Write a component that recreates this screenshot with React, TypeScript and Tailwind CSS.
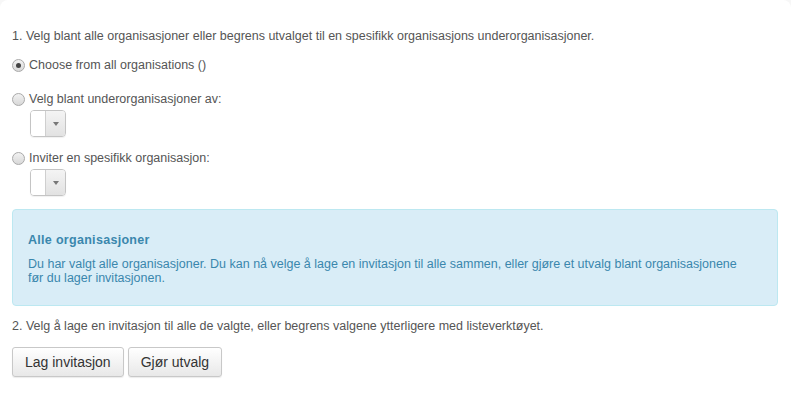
import React from "react";

function Radio({ checked }: { checked?: boolean }) {
  return (
    <span className="w-[13px] h-[13px] rounded-full border border-[#a9a9a9] bg-gradient-to-b from-[#f2f2f2] to-[#d8d8d8] flex items-center justify-center shrink-0">
      {checked && <span className="w-[5px] h-[5px] rounded-full bg-[#444]" />}
    </span>
  );
}

function Select() {
  return (
    <div className="ml-[18px] w-[36px] h-[27px] rounded-[4px] border border-[#c4c4c4] flex overflow-hidden shadow-[0_1px_1px_rgba(0,0,0,0.06)]">
      <div className="w-[15px] bg-white border-r border-[#cfcfcf]" />
      <div className="flex-1 bg-gradient-to-b from-[#f4f4f4] to-[#e2e2e2] flex items-center justify-center">
        <svg width="6" height="4" viewBox="0 0 6 4">
          <path d="M0 0 L6 0 L3 4 Z" fill="#777" />
        </svg>
      </div>
    </div>
  );
}

export default function App() {
  return (
    <div className="w-[791px] h-[402px] bg-[#f7f7f7] font-['Liberation_Sans',Arial,sans-serif]">
      <div className="w-full h-full bg-white rounded-t-[8px] pl-[12px] pr-[13px] pt-[29px] text-[12.5px] text-[#555]">
        <p className="leading-[14px]">
          1. Velg blant alle organisasjoner eller begrens utvalget til en spesifikk organisasjons underorganisasjoner.
        </p>
        <label className="flex items-center gap-[4px] mt-[15px] leading-[14px]">
          <Radio checked />
          <span>Choose from all organisations ()</span>
        </label>
        <label className="flex items-center gap-[4px] mt-[20px] leading-[14px]">
          <Radio />
          <span>Velg blant underorganisasjoner av:</span>
        </label>
        <div className="mt-[4px]">
          <Select />
        </div>
        <label className="flex items-center gap-[4px] mt-[14px] leading-[14px]">
          <Radio />
          <span>Inviter en spesifikk organisasjon:</span>
        </label>
        <div className="mt-[4px]">
          <Select />
        </div>
        <div className="mt-[13px] h-[97px] rounded-[4px] border border-[#bce8f1] bg-[#d9edf7] text-[#3a87ad] pl-[15px] pt-[23px]">
          <h4 className="font-bold text-[12.5px] leading-[14px] tracking-[0.3px]">Alle organisasjoner</h4>
          <p className="mt-[10px] leading-[14px] w-[720px]">
            Du har valgt alle organisasjoner. Du kan nå velge å lage en invitasjon til alle sammen, eller gjøre et utvalg blant organisasjonene
            <br />
            før du lager invitasjonen.
          </p>
        </div>
        <p className="mt-[13px] leading-[14px]">
          2. Velg å lage en invitasjon til alle de valgte, eller begrens valgene ytterligere med listeverktøyet.
        </p>
        <div className="flex gap-[4px] mt-[14px]">
          <button className="h-[30px] px-[12px] rounded-[3px] border border-[#c8c8c8] bg-gradient-to-b from-white to-[#e8e8e8] text-[#333] text-[14px] shadow-[0_1px_1px_rgba(0,0,0,0.08)]">
            Lag invitasjon
          </button>
          <button className="h-[30px] px-[12px] rounded-[3px] border border-[#c8c8c8] bg-gradient-to-b from-white to-[#e8e8e8] text-[#333] text-[14px] shadow-[0_1px_1px_rgba(0,0,0,0.08)]">
            Gjør utvalg
          </button>
        </div>
      </div>
    </div>
  );
}
